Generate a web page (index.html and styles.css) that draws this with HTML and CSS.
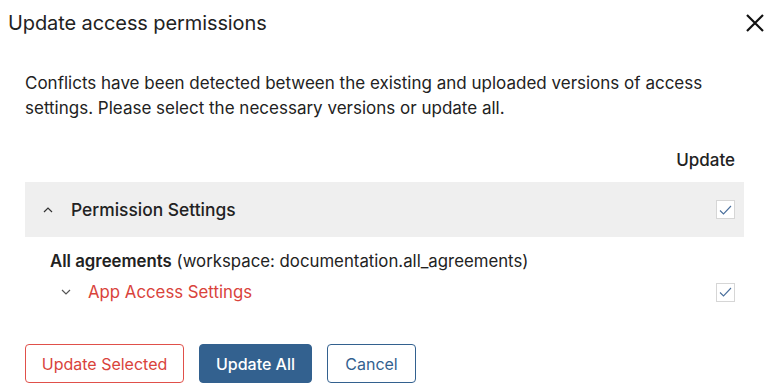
FILE: index.html
```html
<!DOCTYPE html>
<html lang="en">
<head>
    <meta charset="UTF-8">
    <title>Update access permissions</title>
    <link rel="stylesheet" href="styles.css">
</head>
<body>
    <div class="dialog">
        <div class="dialog-header">
            <h1 class="dialog-title">Update access permissions</h1>
            <button class="close-btn" aria-label="Close">
                <svg width="20" height="20" viewBox="0 0 20 20"><path d="M2 2L18 18M18 2L2 18" stroke="#111" stroke-width="2.2" fill="none"/></svg>
            </button>
        </div>

        <div class="dialog-body">
            <p class="intro">Conflicts have been detected between the existing and uploaded versions of access settings. Please select the necessary versions or update all.</p>

            <div class="col-head">Update</div>

            <!-- group row -->
            <div class="group-row">
                <span class="chevron">
                    <svg width="10" height="6" viewBox="0 0 10 6"><path d="M1 5L5 1L9 5" stroke="#333" stroke-width="1.2" fill="none"/></svg>
                </span>
                <span class="group-name">Permission Settings</span>
                <span class="check"><svg width="13" height="10" viewBox="0 0 13 10"><path d="M1 5.5L4.5 9L12 1" stroke="#4a6f9c" stroke-width="1.1" fill="none"/></svg></span>
            </div>

            <div class="app-title"><b>All agreements</b> (workspace: documentation.all_agreements)</div>

            <div class="item-row">
                <span class="chevron">
                    <svg width="10" height="6" viewBox="0 0 10 6"><path d="M1 1L5 5L9 1" stroke="#555" stroke-width="1.2" fill="none"/></svg>
                </span>
                <span class="item-name">App Access Settings</span>
                <span class="check"><svg width="13" height="10" viewBox="0 0 13 10"><path d="M1 5.5L4.5 9L12 1" stroke="#4a6f9c" stroke-width="1.1" fill="none"/></svg></span>
            </div>
        </div>

        <div class="dialog-footer">
            <button class="btn btn-outline-red">Update Selected</button>
            <button class="btn btn-primary">Update All</button>
            <button class="btn btn-outline-blue">Cancel</button>
        </div>
    </div>
</body>
</html>
```

FILE: styles.css
```css
body {
    margin: 0;
    background: #ffffff;
    color: #222;
    font-family: Inter, "Noto Sans", sans-serif;
}

.dialog {
    width: 772px;
    height: 390px;
    box-sizing: border-box;
}

.dialog-header {
    display: flex;
    align-items: center;
    justify-content: space-between;
    padding: 10px 7px 0 8px;
    height: 26px;
}

.dialog-title {
    margin: 0;
    font-size: 20px;
    font-weight: 400;
    color: #222;
    letter-spacing: -0.1px;
}

.close-btn {
    border: none;
    background: none;
    padding: 0;
    width: 20px;
    height: 20px;
    display: flex;
}

.dialog-body {
    padding: 0 28px 0 25px;
}

.intro {
    margin: 35px 0 0;
    font-size: 17px;
    line-height: 25px;
    color: #222;
}

.col-head {
    text-align: right;
    font-size: 17px;
    font-weight: 500;
    margin-top: 29px;
    padding-right: 9px;
    line-height: 20px;
}

.group-row {
    display: flex;
    align-items: center;
    background: #efefef;
    height: 55px;
    margin-top: 12px;
    padding: 0 9px 0 18px;
}

.chevron {
    display: flex;
    width: 10px;
    margin-right: 18px;
}

.group-name {
    flex: 1;
    font-size: 17.4px;
    font-weight: 500;
    color: #222;
}

.check {
    width: 17px;
    height: 17px;
    border: 1px solid #d6d6d6;
    background: #fff;
    display: flex;
    align-items: center;
    justify-content: center;
}

.app-title {
    margin-top: 14px;
    padding-left: 25px;
    font-size: 16.8px;
    line-height: 20px;
    color: #222;
}

.app-title b {
    font-weight: 600;
}

.item-row {
    display: flex;
    align-items: center;
    height: 24px;
    margin-top: 9px;
    padding: 0 9px 0 36px;
}

.item-row .chevron {
    margin-right: 17px;
}

.item-name {
    flex: 1;
    font-size: 16.8px;
    color: #d9433b;
}

.dialog-footer {
    display: flex;
    gap: 15px;
    padding: 40px 0 0 25px;
}

.btn {
    height: 39px;
    box-sizing: border-box;
    border-radius: 4px;
    font-family: Inter, "Noto Sans", sans-serif;
    font-size: 16px;
    padding: 0;
    white-space: nowrap;
    background: #fff;
    cursor: pointer;
}

.btn-outline-red {
    border: 1px solid #e0504a;
    color: #d9433b;
    width: 159px;
}

.btn-primary {
    border: 1px solid #33618f;
    background: #33618f;
    color: #fff;
    width: 113px;
    font-weight: 500;
}

.btn-outline-blue {
    border: 1px solid #33618f;
    color: #33618f;
    width: 89px;
}
```
